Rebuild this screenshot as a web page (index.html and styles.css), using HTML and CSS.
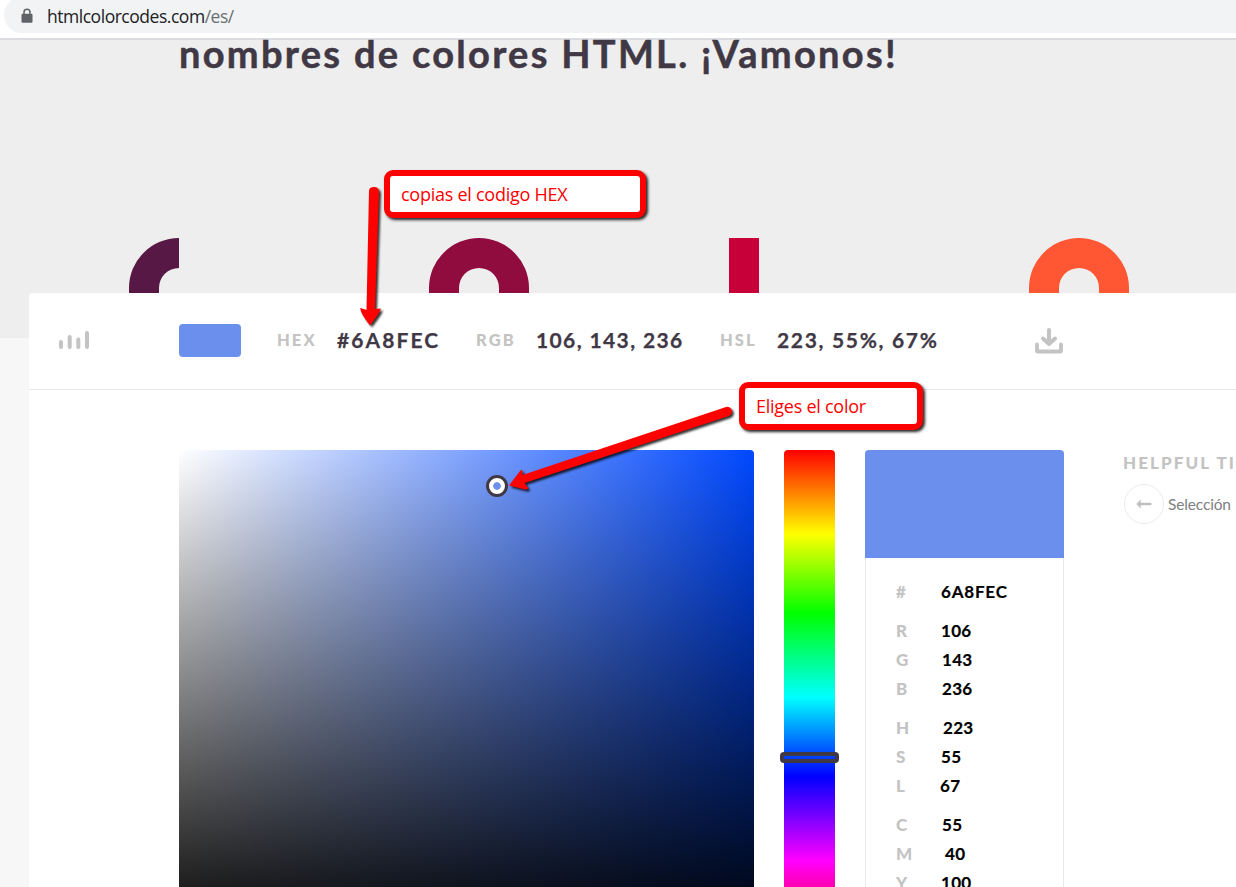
FILE: index.html
```
<!DOCTYPE html>
<html lang="es">
<head>
<meta charset="utf-8">
<title>HTML Color Codes</title>
<link rel="stylesheet" href="styles.css">
</head>
<body>
<div class="screen">
  <header class="browser">
    <div class="address">
      <svg class="lock" width="12" height="16" viewBox="0 0 12 16"><path d="M3 7V4.2a3 3 0 0 1 6 0V7" fill="none" stroke="#5f6368" stroke-width="1.5"/><rect x=".5" y="5.7" width="11" height="9" rx="1.2" fill="#5f6368"/></svg>
      <span class="url">htmlcolorcodes.com<span class="path">/es/</span></span>
    </div>
  </header>
  <section class="hero">
    <h1><span>nombres de colores HTML. ¡Vamonos!</span></h1>
    <svg class="letters" width="1236" height="55" viewBox="0 0 1236 55">
      <path d="M129 55V50A50 50 0 0 1 179 0V30A20 20 0 0 0 159 50V55Z" fill="#581845"/>
      <path d="M429 55V50A50 50 0 0 1 529 50V55H499V50A20 20 0 0 0 459 50V55Z" fill="#900c3f"/>
      <path d="M729 0H759V55H729Z" fill="#c70039"/>
      <path d="M1029 55V50A50 50 0 0 1 1129 50V55H1099V50A20 20 0 0 0 1059 50V55Z" fill="#ff5733"/>
    </svg>
  </section>
  <main class="card">
    <div class="toolbar">
      <svg class="bars" width="31" height="18" viewBox="0 0 31 18" stroke="#c3c3c3" stroke-width="4" stroke-linecap="round"><path d="M2 11V16M10.7 6V16M19.3 8.5V16M28 2V16"/></svg>
      <div class="swatch"></div>
      <span class="key hex">HEX</span><span class="code hexcode">#6A8FEC</span>
      <span class="key rgb">RGB</span><span class="code rgbcode">106, 143, 236</span>
      <span class="key hsl">HSL</span><span class="code hslcode">223, 55%, 67%</span>
      <svg class="download" width="28" height="26" viewBox="0 0 28 26" fill="none" stroke="#c3c3c3" stroke-linecap="round" stroke-linejoin="round"><path d="M14 2V15M8 10.5L14 16L20 10.5" stroke-width="4"/><path d="M2 16.5V22.5Q2 23.5 3 23.5H25Q26 23.5 26 22.5V16.5" stroke-width="3.8"/></svg>
    </div>
    <div class="picker">
      <div class="field"><div class="handle"></div></div>
      <div class="hue"><div class="slider"></div></div>
      <div class="panel">
        <div class="preview"></div>
        <dl class="values">
          <div class="row last"><dt>#</dt><dd class="wide">6A8FEC</dd></div>
          <div class="row"><dt>R</dt><dd>106</dd></div>
          <div class="row"><dt>G</dt><dd class="in1">143</dd></div>
          <div class="row last"><dt>B</dt><dd class="in1">236</dd></div>
          <div class="row"><dt>H</dt><dd class="in2">223</dd></div>
          <div class="row"><dt>S</dt><dd>55</dd></div>
          <div class="row last"><dt>L</dt><dd class="out">67</dd></div>
          <div class="row"><dt>C</dt><dd class="in1">55</dd></div>
          <div class="row"><dt>M</dt><dd class="in4">40</dd></div>
          <div class="row"><dt>Y</dt><dd>100</dd></div>
        </dl>
      </div>
      <aside class="tips">
        <h2>HELPFUL TIPS</h2>
        <div class="tip">
          <span class="back"><svg width="16" height="10" viewBox="0 0 16 10"><path d="M.3 5L4.7.4V3.7H14.5Q15.6 3.7 15.6 5T14.5 6.3H4.7V9.6Z" fill="#bfbfbf"/></svg></span>
          <span class="tiptext">Selección</span>
        </div>
      </aside>
    </div>
  </main>
  <svg class="arrows" width="1236" height="887" viewBox="0 0 1236 887" fill="#f00">
    <path d="M369 191Q369 187 374 187Q379 187 379 192L375 309L380.500 308.500Q382 310 370 325.500Q359 311 360.500 308L366.500 310Z"/>
    <path d="M726 407Q730 406 731.500 409.500Q733 414 729 416L524.500 483L528 488Q528 490 525 489.500L509 485.500L520 471Q522 469 522.500 471V475Z"/>
  </svg>
  <div class="note note-copy"><span>copias el codigo HEX</span></div>
  <div class="note note-pick"><span>Eliges el color</span></div>
</div>
</body>
</html>
```

FILE: styles.css
```
* { box-sizing: border-box; }
body { margin: 0; background: #f7f7f7; font-family: Lato, sans-serif; }
.screen { position: relative; width: 1236px; height: 887px; overflow: hidden; background: #f7f7f7; }
.browser { height: 40px; background: #fff; border-bottom: 2px solid #dadce0; overflow: hidden; }
.address { display: flex; align-items: center; height: 36px; margin: -3px 0 0 4px; padding: 1px 0 0 17px; border-radius: 18px 0 0 18px; background: #f1f3f4; }
.lock { margin-right: 14px; }
.url { font: 17.500px/24px "Open Sans", sans-serif; letter-spacing: -.47px; color: #202124; white-space: nowrap; }
.path { color: #6b6f73; }
.hero { height: 298px; background: #eee; }
.hero h1 { height: 198px; margin: 0; padding-left: 179px; font-size: 38px; line-height: 27px; font-weight: 700; letter-spacing: 2.3px; -webkit-text-stroke: .5px #403845; color: #403845; white-space: nowrap; }
.letters { display: block; }
.card { position: relative; height: 700px; margin: -45px 0 0 29px; background: #fff; border-radius: 4px 0 0; }
.toolbar { display: flex; align-items: center; height: 97px; padding: 0 0 2px 30px; border-bottom: 1px solid #e8e8e8; }
.bars { flex: none; margin-right: 89px; }
.swatch { flex: none; width: 62px; height: 33px; margin-right: 36px; background: #6a8fec; border-radius: 4px; }
.key { flex: none; font-size: 16.500px; font-weight: 900; color: #c3c3c3; letter-spacing: 2.1px; white-space: nowrap; }
.code { flex: none; font-size: 21px; line-height: 24px; margin-top: -1px; font-weight: 700; -webkit-text-stroke: .25px #403845; color: #403845; white-space: nowrap; }
.hex { width: 60px; } .hexcode { width: 139px; letter-spacing: 2.1px; }
.rgb { width: 60px; } .rgbcode { width: 184px; letter-spacing: 1.38px; }
.hsl { width: 57px; } .hslcode { width: 258px; letter-spacing: 1.68px; }
.download { position: relative; top: 1px; }
.picker { display: flex; padding: 60px 0 0 150px; }
.field { flex: none; position: relative; width: 575px; height: 495px; margin-right: 30px; border-radius: 4px; background: linear-gradient(to top, #000, transparent), linear-gradient(to right, #fff, #0048ff); }
.handle { position: absolute; left: 307px; top: 25px; width: 22px; height: 22px; border: 3px solid #403845; border-radius: 50%; background: radial-gradient(circle, #6a8fec 3.4px, #fff 4.2px); }
.hue { flex: none; position: relative; width: 51px; height: 495px; margin-right: 30px; border-radius: 4px; background: linear-gradient(#f00 0, #ff0 17%, #0f0 33%, #0ff 50%, #00f 66%, #f0f 83%, #f00 100%); }
.slider { position: absolute; left: -4px; top: 302px; width: 59px; height: 11px; border: 4px solid #403845; border-radius: 4px; }
.panel { flex: none; width: 199px; height: 495px; margin-right: 59px; border: 1px solid #e8e8e8; border-top: 0; border-radius: 4px; }
.preview { height: 108px; margin: 0 -1px; border-radius: 4px 4px 0 0; background: #6a8fec; }
.values { margin: 0; padding: 19px 0 0 30px; }
.row { display: flex; height: 29px; line-height: 29px; font-size: 17px; font-weight: 700; }
.last { margin-bottom: 10px; }
.row dt { width: 45px; color: #c3c3c3; font-weight: 900; }
.row dd { margin: 0; color: #000; letter-spacing: .3px; -webkit-text-stroke: .2px #000; }
.row .wide { letter-spacing: .8px; }
.row .in1 { padding-left: 1px; }
.row .in2 { padding-left: 2px; }
.row .in4 { padding-left: 4px; }
.row .out { margin-left: -1px; }
.tips { flex: none; width: 180px; }
.tips h2 { margin: 1px 0 9px; font-size: 17px; line-height: 24px; font-weight: 900; letter-spacing: 2.1px; color: #c3c3c3; white-space: nowrap; }
.tip { display: flex; align-items: center; padding-left: 1px; }
.back { display: flex; align-items: center; justify-content: center; width: 40px; height: 40px; margin-right: 4px; border: 1px solid #ececec; border-radius: 50%; }
.tiptext { font-size: 15.500px; letter-spacing: -.15px; color: #808080; }
.arrows { position: absolute; left: 0; top: 0; filter: drop-shadow(2px 2px 1.2px rgba(0,0,0,.8)); }
.note { position: absolute; height: 48px; border: 6px solid #f00; border-radius: 9px; background: #fff; box-shadow: 2px 2px 3px rgba(0,0,0,.85); color: #f00; font: 18px/37px "Open Sans", sans-serif; letter-spacing: -.26px; white-space: nowrap; padding-left: 11px; }
.note-copy { left: 384px; top: 170px; width: 262px; }
.note-pick { left: 739px; top: 382px; width: 184px; }
```
